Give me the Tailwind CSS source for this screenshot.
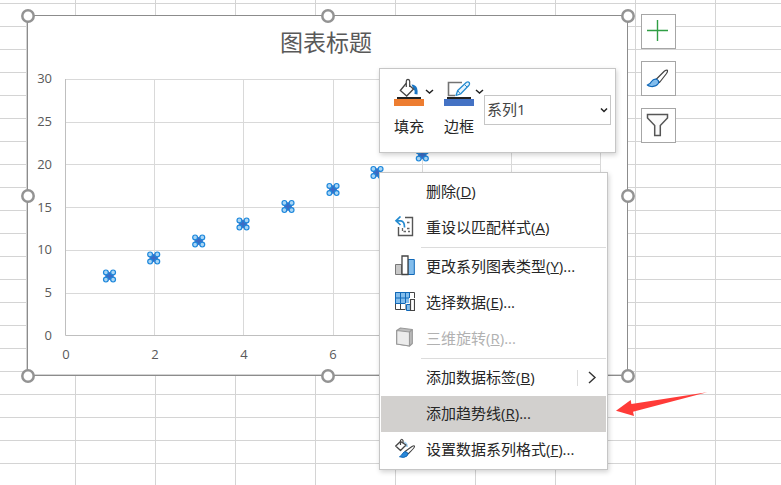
<!DOCTYPE html>
<html lang="zh-CN">
<head>
<meta charset="utf-8">
<meta name="viewport" content="width=device-width, initial-scale=1">
<title>图表标题</title>
<script src="https://cdn.jsdelivr.net/npm/@tailwindcss/browser@4"></script>
</head>
<body class="bg-white font-['Open_Sans','Noto_Sans_CJK_SC',sans-serif] text-[15px] text-[#262626]">
<main class="relative min-h-screen w-full overflow-hidden bg-[linear-gradient(to_right,#d4d4d4_1px,transparent_1px),linear-gradient(to_bottom,#d4d4d4_1px,transparent_1px)] bg-[size:80px_23px] bg-[position:75px_3px]">

  <!-- Chart object -->
  <section aria-label="图表" class="absolute top-[9px] left-[21px]">
    <svg class="block" width="614" height="374" viewBox="21 9 614 374" fill="none">
      <path d="M26.5 15V375M27 374.5H627" stroke="#d4d4d4"/>
      <rect x="27.5" y="15.5" width="600" height="360" fill="#fff" stroke="#8c8c8c"/>
      <path d="M28 374.500H627" stroke="#d4d4d4"/>
      <path stroke="#d9d9d9" d="M65 79.500H601M65 122.500H601M65 164.500H601M65 207.500H601M65 250.500H601M65 293.500H601M154.500 79V335M243.500 79V335M333.500 79V335M422.500 79V335M511.500 79V335M600.500 79V335"/>
      <path stroke="#bfbfbf" d="M65.500 79V335.500H601"/>
      <text x="326" y="51" font-size="23" fill="#595959" text-anchor="middle">图表标题</text>
      <g font-size="13" fill="#595959" text-anchor="end">
        <text x="52" y="83">30</text><text x="52" y="126">25</text><text x="52" y="169">20</text><text x="52" y="212">15</text><text x="52" y="254">10</text><text x="52" y="297">5</text><text x="52" y="340">0</text>
      </g>
      <g font-size="13" fill="#595959" text-anchor="middle">
        <text x="66" y="359">0</text><text x="155" y="359">2</text><text x="244" y="359">4</text><text x="333" y="359">6</text>
      </g>
      <defs>
        <g id="pt">
          <path d="M-4.500 -3L-3 -4.500L0 -3.500L3 -4.500L4.500 -3L3.500 0L4.500 3L3 4.500L0 3.500L-3 4.500L-4.500 3L-3.500 0Z" fill="#3b6cc5" stroke="#3b6cc5"/>
          <g fill="#a9d5f5" stroke="#1e88dc" stroke-width="1.200"><circle cx="-3.600" cy="-3.600" r="2.400"/><circle cx="3.600" cy="-3.600" r="2.400"/><circle cx="-3.600" cy="3.600" r="2.400"/><circle cx="3.600" cy="3.600" r="2.400"/></g>
        </g>
        <circle id="grip" r="5.700" fill="#fff" stroke="#939393" stroke-width="2.500"/>
      </defs>
      <use href="#pt" x="109.500" y="276"/><use href="#pt" x="153.700" y="258"/><use href="#pt" x="198.700" y="241"/><use href="#pt" x="243" y="224"/><use href="#pt" x="288" y="206.500"/><use href="#pt" x="333" y="189.500"/><use href="#pt" x="377" y="172.500"/><use href="#pt" x="422.300" y="155"/>
      <use href="#grip" x="28" y="16"/><use href="#grip" x="328" y="16"/><use href="#grip" x="628" y="16"/><use href="#grip" x="28" y="196"/><use href="#grip" x="628" y="196"/><use href="#grip" x="28" y="376"/><use href="#grip" x="328" y="376"/><use href="#grip" x="628" y="376"/>
    </svg>
  </section>

  <!-- Chart side buttons -->
  <div class="absolute top-[14px] left-[641px] flex flex-col gap-3">
    <button type="button" aria-label="图表元素" class="size-[35px] border border-[#a6a6a6] bg-white"><svg class="block" width="33" height="33" viewBox="642 15 33 33"><path d="M647 30.500H668M657.500 20V41" stroke="#2f9e44" stroke-width="1.400"/></svg></button>
    <button type="button" aria-label="图表样式" class="size-[35px] border border-[#a6a6a6] bg-white"><svg class="block" width="33" height="33" viewBox="642 62 33 33" stroke-linejoin="round"><path d="M656 79.500L664.500 71Q666.500 69.800 667.500 70.300Q667.800 71.500 666.500 73.500L659.500 82.500Z" fill="#fff" stroke="#444" stroke-width="1.200"/><path d="M647.300 85Q650 84.500 651.500 81.500Q653.500 78.500 656.500 79.200Q659.500 80.500 658.300 83.500Q656 87 651 86.500Q648.500 86 647.300 85Z" fill="#83bdec" stroke="#1068b8" stroke-width="1.200"/></svg></button>
    <button type="button" aria-label="图表筛选器" class="size-[35px] border border-[#a6a6a6] bg-white"><svg class="block" width="33" height="33" viewBox="642 109 33 33"><path d="M647.500 114.500H667.500V118L660.300 125.500V135.500H654.700V125.500L647.500 118Z" fill="#fafafa" stroke="#555" stroke-width="1.500"/></svg></button>
  </div>

  <!-- Mini toolbar -->
  <div role="toolbar" aria-label="格式" class="absolute top-[68px] left-[379px] flex items-start border border-[#c6c6c6] bg-white pt-2 pr-1 pb-4 pl-[14px] shadow-[1px_2px_5px_rgba(0,0,0,0.18)]">
    <div class="flex gap-[10px]">
      <button type="button" class="flex w-10 flex-col items-start gap-[10px]">
        <svg class="block" width="40" height="29" viewBox="394 77 40 29" fill="none">
          <path d="M411.500 84.500Q415.500 84.800 417 88Q418 91 417.500 94.500L414.500 94Q415 90 413 88Z" fill="#1b76c4"/>
          <path d="M406.500 83L400.300 90.500L406.700 96L413.500 89Z" fill="#fff" stroke="#444" stroke-width="1.300"/>
          <path d="M406.300 87V81Q406.500 79.300 408 79.300Q409.700 79.500 409.700 81.200V87" fill="#fff" stroke="#444" stroke-width="1.200"/>
          <path d="M397 97H421V99H397Z" fill="#222"/><path d="M394 99H424V106H394Z" fill="#ed7d31"/>
          <path d="M426 90L429.500 93L433 90" stroke="#222" stroke-width="1.500"/>
        </svg>
        <span class="leading-5">填充</span>
      </button>
      <button type="button" class="flex w-10 flex-col items-start gap-[10px]">
        <svg class="block" width="40" height="29" viewBox="444 77 40 29" fill="none">
          <path d="M462 82.500H448.500V95.500H455" stroke="#737373" stroke-width="1.600"/>
          <path d="M456 95.500L457.700 90.500L466.500 82.300Q468.200 81.300 469.300 82.600Q470 84 469 85.200L460.500 94Z" fill="#e9f5fd" stroke="#258bd0" stroke-width="1.300" stroke-linejoin="round"/><path d="M464.500 84.500L467 87M457.700 90.500L460.500 94" stroke="#258bd0"/>
          <path d="M447 97H471V99H447Z" fill="#222"/><path d="M444 99H474V106H444Z" fill="#4472c4"/>
          <path d="M476 90L479.500 93L483 90" stroke="#222" stroke-width="1.500"/>
        </svg>
        <span class="leading-5">边框</span>
      </button>
    </div>
    <label class="relative mt-[18px] block">
      <span class="sr-only">图表元素</span>
      <select class="block h-[30px] w-[127px] appearance-none rounded-none border border-[#c6c6c6] bg-white pb-[2px] pl-[2px] text-[15px] leading-5 text-[#444]"><option>系列1</option></select>
      <svg class="pointer-events-none absolute top-3 right-[3px]" width="8" height="6" viewBox="0 0 8 6" fill="none"><path d="M1 1.500L4 4.500L7 1.500" stroke="#222" stroke-width="1.500"/></svg>
    </label>
  </div>

  <!-- Context menu -->
  <div role="menu" class="absolute top-[172px] left-[379px] flex w-[229px] flex-col border border-[#c6c6c6] bg-white p-px shadow-[1px_2px_5px_rgba(0,0,0,0.18)]">
    <button type="button" role="menuitem" class="flex h-9 items-center gap-[11px] pl-3"><span class="w-[22px]"></span><span class="pb-[2px]">删除(<u>D</u>)</span></button>
    <button type="button" role="menuitem" class="flex h-9 items-center gap-[11px] pl-3">
      <svg width="22" height="24" viewBox="393 216 22 24" fill="none"><path d="M405 217.500H412.500V235.500H398.500V227" stroke="#555" stroke-width="1.400"/><path d="M407 222.500H409.500M407 228.500H409.500M403.500 231.500H406M408 231.500H410M402.500 228V231" stroke="#666" stroke-width="1.300"/><path d="M400.500 216.500L396 220.800L400.500 225M396.500 220.800H401Q404.700 221.500 404.500 227.500" stroke="#258bd0" stroke-width="1.700"/></svg>
      <span class="pb-[2px]">重设以匹配样式(<u>A</u>)</span></button>
    <div role="separator" class="ml-10 h-[3px] py-px"><div class="h-px bg-[#dcdcdc]"></div></div>
    <button type="button" role="menuitem" class="flex h-9 items-center gap-[11px] pl-3">
      <svg width="22" height="24" viewBox="393 255 22 24"><path d="M395.500 264.500H401.500V274.500H395.500Z" fill="#c8c8c8" stroke="#777"/><path d="M408 259.500H414.300V274.500H408Z" fill="#83bdec" stroke="#1068b8"/><path d="M402 256H408V274.500H402Z" fill="#fff" stroke="#444" stroke-width="1.300"/></svg>
      <span class="pb-[2px]">更改系列图表类型(<u>Y</u>)...</span></button>
    <button type="button" role="menuitem" class="flex h-9 items-center gap-[11px] pl-3">
      <svg width="22" height="24" viewBox="393 291 22 24" fill="none"><path d="M395.500 292.500H414.500V309.500H395.500Z" fill="#fff" stroke="#444"/><path d="M400.500 303V309M405.500 303V309M409.500 298.500H414" stroke="#444"/><path d="M395.500 292.500H409.500V303.500H395.500Z" fill="#83bdec" stroke="#1068b8"/><path d="M395.500 298H409.500M400.500 292.500V303.500M405.500 292.500V303.500" stroke="#1068b8"/><path d="M405.500 303H409V298H415V312H405.500Z" fill="#fff"/><path d="M406.500 304.500H410.500V310.500H406.500Z" fill="#83bdec" stroke="#1068b8"/><path d="M410.500 299.500H414.500V310.500H410.500Z" fill="#fff" stroke="#444" stroke-width="1.200"/></svg>
      <span class="pb-[2px]">选择数据(<u>E</u>)...</span></button>
    <button type="button" role="menuitem" disabled class="flex h-9 items-center gap-[11px] pl-3 text-[#b1b1b1]">
      <svg width="22" height="24" viewBox="393 327 22 24" stroke="#999" stroke-width="1.200" stroke-linejoin="round"><path d="M396.700 330.500L400.500 328L412.300 329.500V343.500L409.500 346L396.700 344Z" fill="#bdbdbd"/><path d="M396.700 330.500L409.500 332V346L396.700 344Z" fill="#ececec"/><path d="M409.500 332L412.300 329.500"/></svg>
      <span class="pb-[2px]">三维旋转(<u>R</u>)...</span></button>
    <div role="separator" class="ml-10 h-[3px] py-px"><div class="h-px bg-[#dcdcdc]"></div></div>
    <button type="button" role="menuitem" aria-haspopup="menu" class="flex h-9 items-center gap-[11px] pr-[9px] pl-3"><span class="w-[22px]"></span><span class="pb-[2px]">添加数据标签(<u>B</u>)</span>
      <span class="ml-auto flex h-4 items-center border-l border-[#dcdcdc] pl-[10px]"><svg width="9" height="14" viewBox="0 0 9 14" fill="none"><path d="M1 1L7 6.500L1 12" stroke="#333" stroke-width="1.400"/></svg></span></button>
    <button type="button" role="menuitem" class="flex h-9 items-center gap-[11px] bg-[#d2d0ce] pl-3"><span class="w-[22px]"></span><span class="pb-[2px]">添加趋势线(<u>R</u>)...</span></button>
    <button type="button" role="menuitem" class="flex h-9 items-center gap-[11px] pl-3">
      <svg width="22" height="24" viewBox="393 438 22 24" stroke-linejoin="round"><path d="M403.500 441.500Q408 442 408 447L405.500 447Z" fill="#a9d5f5"/><path d="M400.500 441.500L395.700 446L400.500 450.500L406 445Z" fill="#fff" stroke="#444" stroke-width="1.300"/><path d="M400.500 445V440.500Q401.800 438 403 440.500V443" fill="none" stroke="#444" stroke-width="1.200"/><path d="M405 451.500L412 446.500Q414.500 445 414.500 446.500Q414.500 448 408 454Z" fill="#fff" stroke="#444" stroke-width="1.100"/><path d="M399.500 456.700Q401.500 456 402.500 453.500Q404 451 406.500 452Q409 453.500 407 456Q404 458.500 399.500 456.700Z" fill="#2b88d8" stroke="#1068b8"/></svg>
      <span class="pb-[2px]">设置数据系列格式(<u>F</u>)...</span></button>
  </div>

  <!-- Annotation arrow -->
  <svg class="pointer-events-none absolute top-[390px] left-[615px]" width="94" height="28" viewBox="615 390 94 28" aria-hidden="true"><path d="M616 410.700L630.700 400L631.400 404L707 392.200L633 411.700L634 416Z" fill="#ff3b38"/></svg>
</main>
</body>
</html>
